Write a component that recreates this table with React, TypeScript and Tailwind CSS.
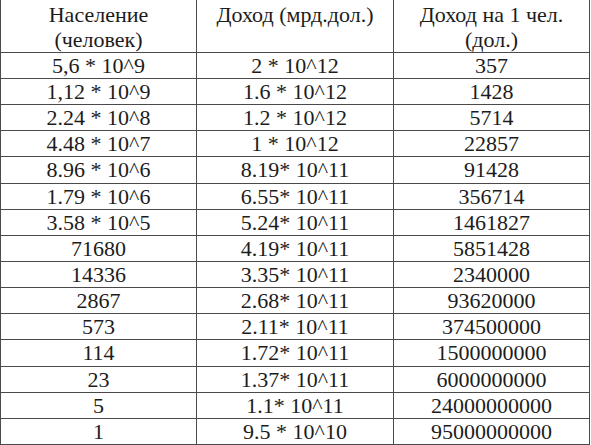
import React from "react";

const rows: [string, string, string][] = [
  ["5,6 * 10^9", "2 * 10^12", "357"],
  ["1,12 * 10^9", "1.6 * 10^12", "1428"],
  ["2.24 * 10^8", "1.2 * 10^12", "5714"],
  ["4.48 * 10^7", "1 * 10^12", "22857"],
  ["8.96 * 10^6", "8.19* 10^11", "91428"],
  ["1.79 * 10^6", "6.55* 10^11", "356714"],
  ["3.58 * 10^5", "5.24* 10^11", "1461827"],
  ["71680", "4.19* 10^11", "5851428"],
  ["14336", "3.35* 10^11", "2340000"],
  ["2867", "2.68* 10^11", "93620000"],
  ["573", "2.11* 10^11", "374500000"],
  ["114", "1.72* 10^11", "1500000000"],
  ["23", "1.37* 10^11", "6000000000"],
  ["5", "1.1* 10^11", "24000000000"],
  ["1", "9.5 * 10^10", "95000000000"],
];

const tall = new Set([4, 11]);

function Cell({ w, children }: { w: string; children: React.ReactNode }) {
  return (
    <div className={`${w} border-r border-[#4a4a4a] text-center font-['Liberation_Serif'] text-[22px] leading-[26px]`}>
      {children}
    </div>
  );
}

export default function App() {
  return (
    <div className="w-[591px] h-[445px] bg-white text-[#1c1c1c] overflow-hidden">
      <div className="w-[590px] border-l border-[#4a4a4a]">
        <div className="flex h-[53px] border-b border-[#4a4a4a] font-['Liberation_Serif'] text-[22px] leading-[25px]">
          <div className="w-[196px] border-r border-[#4a4a4a] text-center pt-[2px] font-['Liberation_Serif']">
            Население
            <br />
            (человек)
          </div>
          <div className="w-[197px] border-r border-[#4a4a4a] text-center pt-[2px] font-['Liberation_Serif']">
            Доход (мрд.дол.)
          </div>
          <div className="w-[196px] border-r border-[#4a4a4a] text-center pt-[2px] font-['Liberation_Serif']">
            Доход на 1 чел.
            <br />
            (дол.)
          </div>
        </div>
        {rows.map((r, i) => (
          <div
            key={i}
            className={`flex border-b border-[#4a4a4a] ${tall.has(i) ? "h-[27px]" : "h-[26px]"}`}
          >
            <Cell w="w-[196px]">{r[0]}</Cell>
            <Cell w="w-[197px]">{r[1]}</Cell>
            <Cell w="w-[196px]">{r[2]}</Cell>
          </div>
        ))}
      </div>
    </div>
  );
}
